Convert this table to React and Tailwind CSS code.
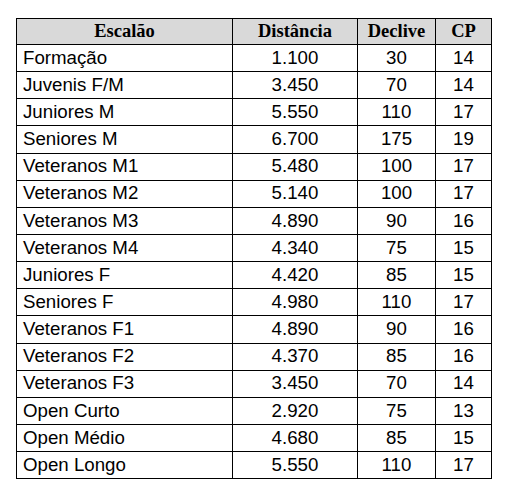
const rows = [
  ["Formação", "1.100", "30", "14"],
  ["Juvenis F/M", "3.450", "70", "14"],
  ["Juniores M", "5.550", "110", "17"],
  ["Seniores M", "6.700", "175", "19"],
  ["Veteranos M1", "5.480", "100", "17"],
  ["Veteranos M2", "5.140", "100", "17"],
  ["Veteranos M3", "4.890", "90", "16"],
  ["Veteranos M4", "4.340", "75", "15"],
  ["Juniores F", "4.420", "85", "15"],
  ["Seniores F", "4.980", "110", "17"],
  ["Veteranos F1", "4.890", "90", "16"],
  ["Veteranos F2", "4.370", "85", "16"],
  ["Veteranos F3", "3.450", "70", "14"],
  ["Open Curto", "2.920", "75", "13"],
  ["Open Médio", "4.680", "85", "15"],
  ["Open Longo", "5.550", "110", "17"],
];

export default function App() {
  return (
    <div className="w-[507px] h-[495px] bg-white pt-[18px] pl-[16px]">
      <table className="border-collapse text-black" style={{ tableLayout: "fixed" }}>
        <colgroup>
          <col className="w-[216px]" />
          <col className="w-[125px]" />
          <col className="w-[78px]" />
          <col className="w-[56px]" />
        </colgroup>
        <thead>
          <tr className="h-[26px] bg-[#d9d9d9] font-['Liberation_Serif',serif] font-bold text-[18.5px]">
            <th className="border border-black p-0 text-center leading-none">Escalão</th>
            <th className="border border-black p-0 text-center leading-none">Distância</th>
            <th className="border border-black p-0 text-center leading-none">Declive</th>
            <th className="border border-black p-0 text-center leading-none">CP</th>
          </tr>
        </thead>
        <tbody className="font-['Liberation_Sans',Arial,sans-serif] text-[18.7px]">
          {rows.map((r) => (
            <tr key={r[0]} className="h-[27.15px]">
              <td className="border border-black py-0 pl-[6px] leading-none">{r[0]}</td>
              <td className="border border-black p-0 text-center leading-none">{r[1]}</td>
              <td className="border border-black p-0 text-center leading-none">{r[2]}</td>
              <td className="border border-black p-0 text-center leading-none">{r[3]}</td>
            </tr>
          ))}
        </tbody>
      </table>
    </div>
  );
}
